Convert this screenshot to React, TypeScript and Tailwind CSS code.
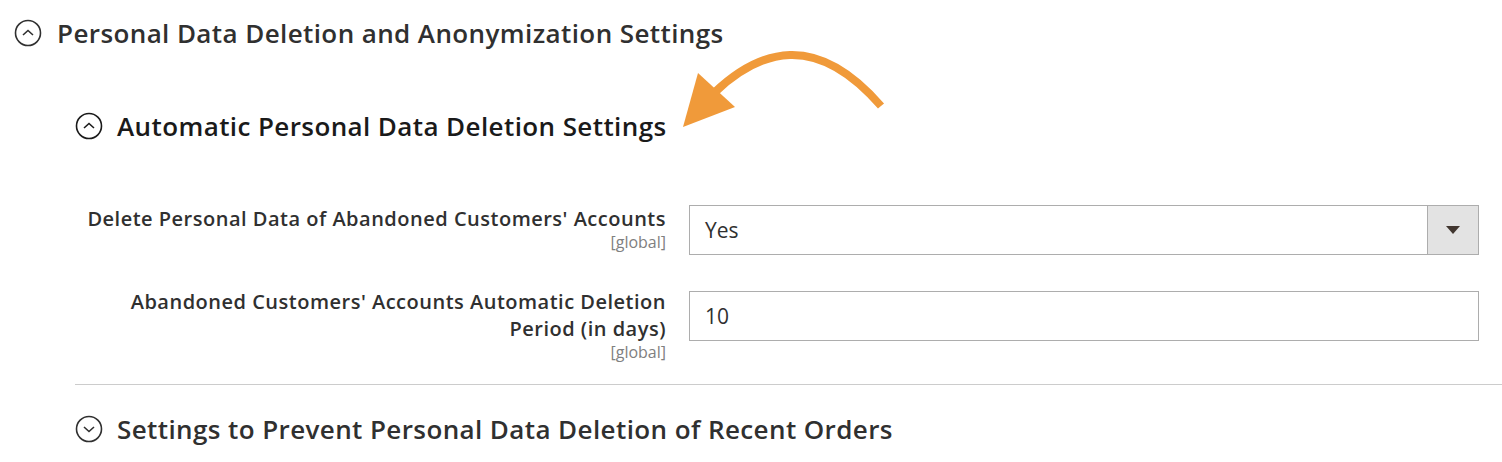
import React from "react";

function CircleChevron({ up, color }: { up: boolean; color: string }) {
  return (
    <svg width="28" height="28" viewBox="0 0 28 28" fill="none">
      <circle cx="14" cy="14" r="12.5" stroke={color} strokeWidth="1.6" />
      {up ? (
        <path d="M9 16 L14 11.5 L19 16" stroke={color} strokeWidth="1.6" fill="none" />
      ) : (
        <path d="M9 12 L14 16.5 L19 12" stroke={color} strokeWidth="1.6" fill="none" />
      )}
    </svg>
  );
}

export default function App() {
  return (
    <div
      className="relative w-[1502px] h-[462px] bg-white overflow-hidden text-[#303030]"
      style={{ fontFamily: '"Open Sans", sans-serif' }}
    >
      <div className="flex items-center h-[66px] pl-[14px] gap-[15px]">
        <CircleChevron up color="#303030" />
        <h2 className="text-[26px] font-semibold tracking-[0.4px] text-[#303030]">
          Personal Data Deletion and Anonymization Settings
        </h2>
      </div>

      <div className="ml-[75px]">
        <div className="flex items-center h-[50px] mt-[35px] gap-[14px]">
          <CircleChevron up color="#1a1a1a" />
          <h3 className="text-[26px] font-semibold tracking-[0.4px] text-[#1a1a1a]">
            Automatic Personal Data Deletion Settings
          </h3>
        </div>

        <div className="mt-[54px] flex gap-[23px] pr-[23px]">
          <div className="w-[591px] text-right">
            <div className="text-[20px] leading-[27px] font-semibold tracking-[0.5px] text-[#303030]">
              Delete Personal Data of Abandoned Customers' Accounts
            </div>
            <div className="text-[16px] leading-[20px] text-[#808080]">[global]</div>
          </div>
          <div className="flex-1 flex h-[50px] border border-[#adadad] bg-white">
            <div className="flex-1 flex items-center pl-[15px] pt-[2px] text-[21px] text-[#303030]">Yes</div>
            <div className="w-[51px] flex items-center justify-center bg-[#e3e3e3] border-l border-[#adadad]">
              <svg width="14" height="8" viewBox="0 0 14 8">
                <path d="M0 0 L14 0 L7 8 Z" fill="#41362f" />
              </svg>
            </div>
          </div>
        </div>

        <div className="mt-[36px] flex gap-[23px] pr-[23px]">
          <div className="w-[591px] text-right -mt-[3px]">
            <div className="text-[20px] leading-[27px] font-semibold tracking-[0.5px] text-[#303030]">
              Abandoned Customers' Accounts Automatic Deletion
              <br />
              Period (in days)
            </div>
            <div className="text-[16px] leading-[20px] text-[#808080]">[global]</div>
          </div>
          <div className="flex-1 h-[50px] flex items-center border border-[#adadad] pl-[15px] pt-[2px] text-[21px] text-[#303030]">
            10
          </div>
        </div>

        <div className="mt-[22px] border-t border-[#cccccc]" />

        <div className="flex items-center h-[50px] mt-[19px] gap-[14px]">
          <CircleChevron up={false} color="#303030" />
          <h3 className="text-[26px] font-semibold tracking-[0.4px] text-[#303030]">
            Settings to Prevent Personal Data Deletion of Recent Orders
          </h3>
        </div>
      </div>

      <svg
        className="absolute left-0 top-0 pointer-events-none"
        width="1502"
        height="462"
        viewBox="0 0 1502 462"
      >
        <path
          d="M881 106 C 855 76 825 54 790 55 C 762 56 738 70 714 93"
          stroke="#f09a3a"
          strokeWidth="8"
          fill="none"
        />
        <polygon points="698,73 735,107 683,127" fill="#f09a3a" />
      </svg>
    </div>
  );
}
